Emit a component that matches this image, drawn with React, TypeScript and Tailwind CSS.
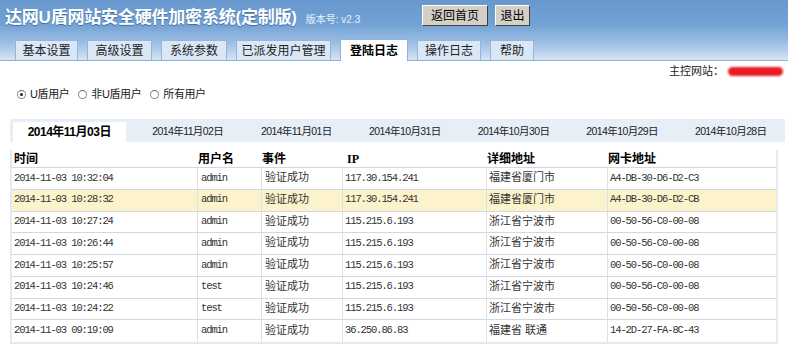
const navTabs = [
  { label: "基本设置", w: "w-[63px]" },
  { label: "高级设置", w: "w-[65px]" },
  { label: "系统参数", w: "w-[66px]" },
  { label: "已派发用户管理", w: "w-[95px]" },
  { label: "登陆日志", w: "w-[68px]", active: true },
  { label: "操作日志", w: "w-[64px]" },
  { label: "帮助", w: "w-[44px]" },
];

const dates = [
  "2014年11月02日",
  "2014年11月01日",
  "2014年10月31日",
  "2014年10月30日",
  "2014年10月29日",
  "2014年10月28日",
];

const rows = [
  ["2014-11-03 10:32:04", "admin", "验证成功", "117.30.154.241", "福建省厦门市", "A4-DB-30-D6-D2-C3"],
  ["2014-11-03 10:28:32", "admin", "验证成功", "117.30.154.241", "福建省厦门市", "A4-DB-30-D6-D2-CB"],
  ["2014-11-03 10:27:24", "admin", "验证成功", "115.215.6.193", "浙江省宁波市", "00-50-56-C0-00-08"],
  ["2014-11-03 10:26:44", "admin", "验证成功", "115.215.6.193", "浙江省宁波市", "00-50-56-C0-00-08"],
  ["2014-11-03 10:25:57", "admin", "验证成功", "115.215.6.193", "浙江省宁波市", "00-50-56-C0-00-08"],
  ["2014-11-03 10:24:46", "test", "验证成功", "115.215.6.193", "浙江省宁波市", "00-50-56-C0-00-08"],
  ["2014-11-03 10:24:22", "test", "验证成功", "115.215.6.193", "浙江省宁波市", "00-50-56-C0-00-08"],
  ["2014-11-03 09:19:09", "admin", "验证成功", "36.250.86.83", "福建省 联通", "14-2D-27-FA-8C-43"],
];

const cols = "grid grid-cols-[185px_64px_81px_144px_121px_169px]";
const mono = "font-['Liberation_Mono','Noto_Sans_CJK_SC',monospace] text-[10.5px] tracking-[-1.1px]";

function Radio({ checked, label }: { checked?: boolean; label: string }) {
  return (
    <label className="flex items-center gap-[4px]">
      <span className="w-[9px] h-[9px] rounded-full border border-[#8c8c8c] border-t-[#6a6a6a] bg-white flex items-center justify-center">
        {checked && <span className="w-[3px] h-[3px] rounded-full bg-[#222]" />}
      </span>
      <span className="tracking-[-0.4px]">{label}</span>
    </label>
  );
}

const App = () => {
  return (
    <div className="w-[788px] h-[354px] bg-white overflow-hidden text-[#222] font-['Liberation_Sans','Noto_Sans_CJK_SC',sans-serif]">
      {/* header */}
      <div className="h-[61px] bg-[linear-gradient(to_bottom,#6898cd_0%,#72a1d5_40%,#9dbfe4_72%,#d6e5f4_100%)] border-b border-[#8fb1da] flex flex-col">
        <div className="h-[40px] flex items-start">
          <div className="w-[422px] h-[36px] flex items-center pl-[5px]">
            <span className="text-white font-bold text-[17px] tracking-[-0.2px] [text-shadow:0_1px_1px_#3f6d9f]">
              达网U盾网站安全硬件加密系统(定制版)
            </span>
            <span className="ml-[9px] text-[10px] text-[#e8f0fa] mt-[3px]">版本号: v2.3</span>
          </div>
          <div className="flex gap-[7px] mt-[5px]">
            <button className="w-[66px] h-[21px] bg-[#d4d0c8] border border-t-white border-l-white border-r-[#404040] border-b-[#404040] text-[12px] text-black">
              返回首页
            </button>
            <button className="w-[35px] h-[21px] bg-[#d4d0c8] border border-t-white border-l-white border-r-[#404040] border-b-[#404040] text-[12px] text-black">
              退出
            </button>
          </div>
        </div>
        <div className="flex items-end gap-[9px] pl-[15px] h-[21px]">
          {navTabs.map((t) =>
            t.active ? (
              <div
                key={t.label}
                className={`${t.w} h-[22px] -mb-[1px] bg-white border border-b-0 border-[#8fb1da] flex items-center justify-center text-[12px] font-bold text-black`}
              >
                {t.label}
              </div>
            ) : (
              <div
                key={t.label}
                className={`${t.w} h-[20px] bg-[#dae7f5] border border-b-0 border-[#94b6dd] flex items-center justify-center text-[12px] text-[#222]`}
              >
                {t.label}
              </div>
            )
          )}
        </div>
      </div>

      {/* site line */}
      <div className="h-[20px] flex items-center justify-end pr-[5px] text-[11px]">
        <span>主控网站：</span>
        <span className="ml-[4px] w-[55px] h-[9px] rounded-full bg-[#ea1a22] blur-[1px]" />
      </div>

      {/* radios */}
      <div className="h-[26px] flex items-center gap-[9px] pl-[17px] text-[11px]">
        <Radio checked label="U盾用户" />
        <Radio label="非U盾用户" />
        <Radio label="所有用户" />
      </div>

      {/* date tabs */}
      <div className="mt-[12px] ml-[10px] w-[775px] h-[23px] bg-[#e6eef8] flex items-end pl-[3px]">
        <div className="w-[114px] h-[20px] bg-white flex items-center justify-center text-[12px] font-bold text-black tracking-[-0.5px]">
          2014年11月03日
        </div>
        <div className="w-[8px]" />
        {dates.map((d) => (
          <div key={d} className="w-[110px] h-[20px] flex items-center justify-center text-[10.5px] tracking-[-0.6px] text-[#222]">
            {d}
          </div>
        ))}
      </div>

      {/* table */}
      <div className="mt-[8px] ml-[10px] w-[768px] border-x-2 border-b-2 border-[#e1e9f3]">
        <div className={`${cols} h-[18px] border-b border-[#d3d8df] text-[12px] font-bold text-black items-center`}>
          <div className="pl-[2px]">时间</div>
          <div className="pl-[1px]">用户名</div>
          <div className="pl-[1px]">事件</div>
          <div className="pl-[5px] font-['Liberation_Serif',serif]">IP</div>
          <div className="pl-[1px]">详细地址</div>
          <div className="pl-[1px]">网卡地址</div>
        </div>
        {rows.map((r, i) => (
          <div
            key={i}
            className={`${cols} h-[21.75px] border-b border-[#d3d8df] last:border-b-0 text-[#333] ${i === 1 ? "bg-[#fcf2cb]" : ""}`}
          >
            <div className={`pl-[2px] flex items-center ${mono}`}>{r[0]}</div>
            <div className={`pl-[3px] border-l border-[#dde1e7] flex items-center ${mono}`}>{r[1]}</div>
            <div className="pl-[3px] border-l border-[#dde1e7] flex items-center text-[11px] -mt-[2px]">{r[2]}</div>
            <div className={`pl-[2px] border-l border-[#dde1e7] flex items-center ${mono}`}>{r[3]}</div>
            <div className="pl-[2px] border-l border-[#dde1e7] flex items-center text-[11px] -mt-[2px]">{r[4]}</div>
            <div className={`pl-[2px] border-l border-[#dde1e7] flex items-center ${mono}`}>{r[5]}</div>
          </div>
        ))}
      </div>
    </div>
  );
};

export default App;
